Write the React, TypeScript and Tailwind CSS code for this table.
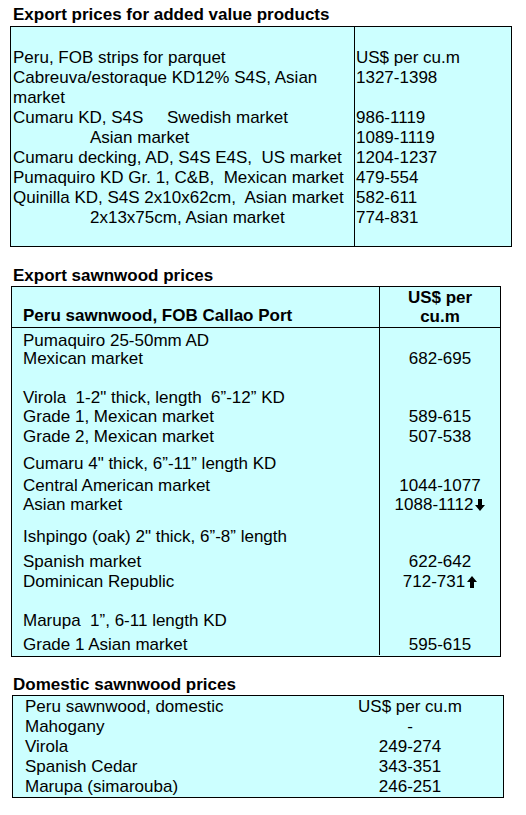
const font = { fontFamily: '"Liberation Sans", Arial, sans-serif' };

const addedValue = [
  { label: "Peru, FOB strips for parquet", value: "US$ per cu.m" },
  { label: "Cabreuva/estoraque KD12% S4S, Asian", value: "1327-1398" },
  { label: "market", value: "" },
  { label: "Cumaru KD, S4S", extra: "Swedish market", value: "986-1119" },
  { label: "Asian market", indent: true, value: "1089-1119" },
  { label: "Cumaru decking, AD, S4S E4S,  US market", value: "1204-1237" },
  { label: "Pumaquiro KD Gr. 1, C&B,  Mexican market", value: "479-554" },
  { label: "Quinilla KD, S4S 2x10x62cm,  Asian market", value: "582-611" },
  { label: "2x13x75cm, Asian market", indent: true, value: "774-831" },
];

const sawnwood = [
  { label: "Pumaquiro 25-50mm AD", value: "", mt: "mt-[3px]" },
  { label: "Mexican market", value: "682-695", mt: "-mt-[2px]" },
  { label: "Virola  1-2\" thick, length  6\u201d-12\u201d KD", value: "", mt: "mt-[19px]" },
  { label: "Grade 1, Mexican market", value: "589-615", mt: "-mt-[1px]" },
  { label: "Grade 2, Mexican market", value: "507-538", mt: "mt-0" },
  { label: "Cumaru 4\" thick, 6\u201d-11\u201d length KD", value: "", mt: "mt-[7px]" },
  { label: "Central American market", value: "1044-1077", mt: "mt-[2px]" },
  { label: "Asian market", value: "1088-1112", arrow: "down", mt: "-mt-[1px]" },
  { label: "Ishpingo (oak) 2\" thick, 6\u201d-8\u201d length", value: "", mt: "mt-[12px]" },
  { label: "Spanish market", value: "622-642", mt: "mt-[5px]" },
  { label: "Dominican Republic", value: "712-731", arrow: "up", mt: "mt-0" },
  { label: "Marupa  1\u201d, 6-11 length KD", value: "", mt: "mt-[19px]" },
  { label: "Grade 1 Asian market", value: "595-615", mt: "mt-[4px]" },
];

const domestic = [
  ["Peru sawnwood, domestic", "US$ per cu.m"],
  ["Mahogany", "-"],
  ["Virola", "249-274"],
  ["Spanish Cedar", "343-351"],
  ["Marupa (simarouba)", "246-251"],
];

const Arrow = ({ dir }: { dir: string }) => (
  <svg width="10" height="12" viewBox="0 0 10 12" className="ml-[2px]">
    {dir === "down" ? (
      <path d="M3 0h4v6h3l-5 6-5-6h3z" fill="#000" />
    ) : (
      <path d="M3 12h4V6h3L5 0 0 6h3z" fill="#000" />
    )}
  </svg>
);

export default function App() {
  return (
    <div className="min-h-screen bg-white text-black text-[17px] leading-[20px]" style={font}>
      <div className="pt-[5px]">
        {/* Added value products */}
        <h2 className="pl-[13px] font-bold h-[21px]">Export prices for added value products</h2>
        <div className="ml-[10px] w-[502px] border border-black bg-[#ccffff] flex">
          <div className="w-[344px] border-r border-black pt-[21px] pb-[18px] pl-[2px]">
            {addedValue.map((r, i) => (
              <div key={i} className={`h-[20px] whitespace-pre ${r.indent ? "pl-[77px]" : ""}`}>
                {r.extra ? (
                  <>
                    <span className="inline-block w-[154px]">{r.label}</span>
                    {r.extra}
                  </>
                ) : (
                  r.label
                )}
              </div>
            ))}
          </div>
          <div className="flex-1 pt-[21px] pl-[1px]">
            {addedValue.map((r, i) => (
              <div key={i} className="h-[20px] whitespace-pre">
                {r.value}
              </div>
            ))}
          </div>
        </div>

        {/* Export sawnwood */}
        <h2 className="mt-[19px] pl-[13px] font-bold h-[20px]">Export sawnwood prices</h2>
        <div className="ml-[11px] w-[490px] border border-black bg-[#ccffff]">
          <div className="flex border-b border-black font-bold">
            <div className="w-[368px] border-r border-black h-[40px] pl-[11px] flex items-end pb-[1px]">
              Peru sawnwood, FOB Callao Port
            </div>
            <div className="flex-1 text-center leading-[19px] pt-[1px]">
              US$ per
              <br />
              cu.m
            </div>
          </div>
          <div className="flex pb-[1px]">
            <div className="w-[368px] border-r border-black pl-[11px]">
              {sawnwood.map((r, i) => (
                <div key={i} className={`h-[20px] whitespace-pre ${r.mt}`}>
                  {r.label}
                </div>
              ))}
            </div>
            <div className="flex-1">
              {sawnwood.map((r, i) => (
                <div key={i} className={`h-[20px] flex items-center justify-center ${r.mt}`}>
                  {r.value}
                  {r.arrow && <Arrow dir={r.arrow} />}
                </div>
              ))}
            </div>
          </div>
        </div>

        {/* Domestic */}
        <h2 className="mt-[18px] pl-[13px] font-bold h-[20px]">Domestic sawnwood prices</h2>
        <div className="ml-[12px] w-[492px] border border-black bg-[#ccffff] pt-[1px]">
          {domestic.map(([name, price], i) => (
            <div key={i} className="grid grid-cols-[1fr_186px] h-[20px]">
              <div className="pl-[12px]">{name}</div>
              <div className="text-center">{price}</div>
            </div>
          ))}
        </div>
      </div>
    </div>
  );
}
